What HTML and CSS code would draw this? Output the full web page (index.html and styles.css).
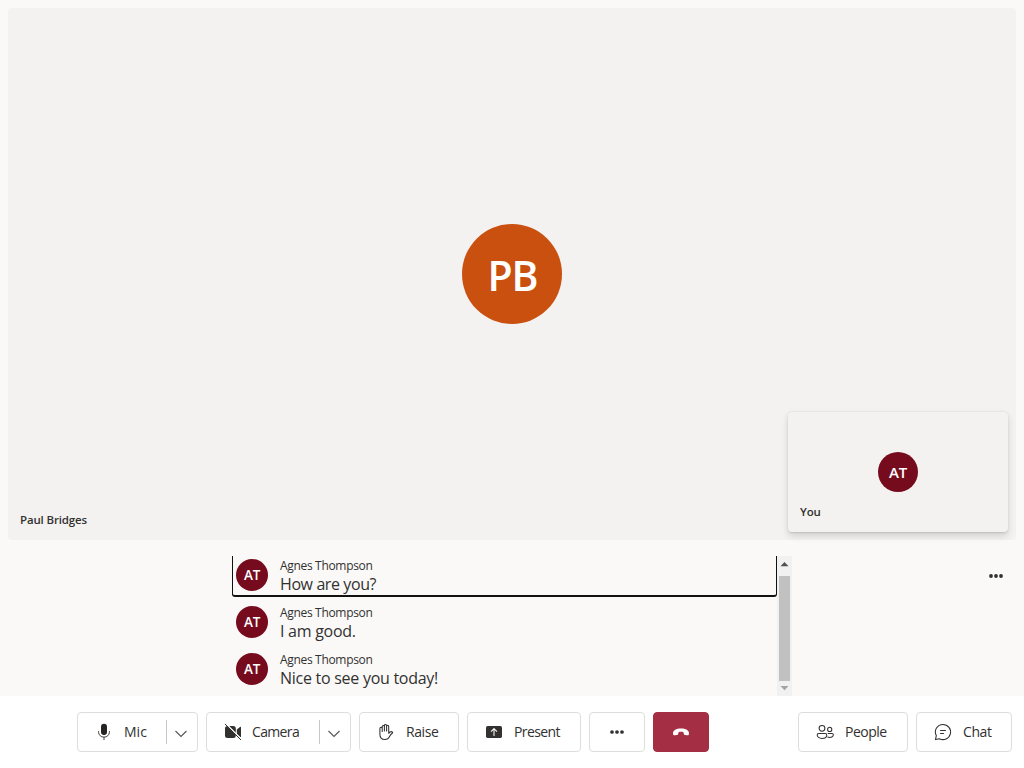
FILE: index.html
```html
<!DOCTYPE html>
<html lang="en">
<head>
<meta charset="utf-8">
<title>Call</title>
<link rel="stylesheet" href="styles.css">
</head>
<body>
<main class="call">
  <section class="stage">
    <div class="avatar avatar-large"><span class="initials-large">PB</span></div>
    <span class="tile-name"><span class="name-paul">Paul Bridges</span></span>
    <div class="local-tile">
      <div class="avatar avatar-medium"><span class="initials-medium">AT</span></div>
      <span class="tile-name"><span class="name-you">You</span></span>
    </div>
  </section>
  <section class="captions">
    <div class="caption-list">
      <div class="caption focused">
        <div class="avatar avatar-small"><span class="initials-small">AT</span></div>
        <div class="caption-body"><div class="speaker">Agnes Thompson</div><div class="speech speech-question">How are you?</div></div>
      </div>
      <div class="caption">
        <div class="avatar avatar-small"><span class="initials-small">AT</span></div>
        <div class="caption-body"><div class="speaker">Agnes Thompson</div><div class="speech">I am good.</div></div>
      </div>
      <div class="caption">
        <div class="avatar avatar-small"><span class="initials-small">AT</span></div>
        <div class="caption-body"><div class="speaker">Agnes Thompson</div><div class="speech">Nice to see you today!</div></div>
      </div>
    </div>
    <div class="scrollbar">
      <svg class="scroll-arrow" viewBox="0 0 15 20"><path d="M3.500 10.200h8L7.500 6z" fill="#505050"/></svg>
      <div class="scroll-thumb"></div>
      <svg class="scroll-arrow-end" viewBox="0 0 15 15"><path d="M3.500 5h8l-4 4.200z" fill="#a3a3a3"/></svg>
    </div>
    <div class="caption-more">
      <svg class="icon" viewBox="0 0 20 20"><g fill="#323130"><circle cx="5" cy="10" r="1.900"/><circle cx="10" cy="10" r="1.900"/><circle cx="15" cy="10" r="1.900"/></g></svg>
    </div>
  </section>
</main>
<footer class="controls">
  <div class="group">
    <div class="button mic">
      <svg class="icon" viewBox="0 0 20 20"><rect x="7" y="1.700" width="6" height="11.300" rx="3" fill="#252423"/><path d="M4.600 9.500v.7a5.400 5 0 0 0 10.800 0v-.7M10 15.200v2.500" fill="none" stroke="#484644" stroke-width="1" stroke-linecap="round"/></svg>
      <span class="label label-mic">Mic</span>
      <span class="split"><svg class="chevron" viewBox="0 0 14 8"><path d="M1.500 1 7 6.500 12.500 1" fill="none" stroke="#555" stroke-width="1.100"/></svg></span>
    </div>
    <div class="button camera">
      <svg class="icon" viewBox="0 0 20 20"><path d="M2 6.500A2.500 2.500 0 0 1 4.500 4h5.800A2.500 2.500 0 0 1 12.800 6.500v7a2.500 2.500 0 0 1-2.500 2.500H4.500A2.500 2.500 0 0 1 2 13.500zM13.800 7.500 17 5q1-.7 1 .5v9q0 1-1 .4l-3.200-2.500z" fill="#323130"/><path d="M3 1.800 18.500 17.300" stroke="#fff" stroke-width="1.300"/><path d="m2 2 16 16" stroke="#323130" stroke-width="1"/></svg>
      <span class="label label-camera">Camera</span>
      <span class="split"><svg class="chevron" viewBox="0 0 14 8"><path d="M1.500 1 7 6.500 12.500 1" fill="none" stroke="#555" stroke-width="1.100"/></svg></span>
    </div>
    <div class="button raise">
      <svg class="icon" viewBox="0 0 20 20"><path d="M6.200 9.500V4.600a1.100 1.100 0 0 1 2.200 0M8.400 9V3.500a1.100 1.100 0 0 1 2.200 0V9M10.600 4.300a1.050 1.050 0 0 1 2.100 0V9.500M6.200 9.500V6.400a1.100 1.100 0 0 0-2.300 0v5.800c0 3.300 1.900 5.300 4.900 5.300 2.500 0 3.900-1 4.900-3.200.7-1.400 1.700-2.400 2.700-3.300.4-.3.300-.7-.1-1-1-.7-2.300-.3-3.600 1.300V4.500" fill="none" stroke="#323130" stroke-width="1.050" stroke-linejoin="round" stroke-linecap="round"/></svg>
      <span class="label label-raise">Raise</span>
    </div>
    <div class="button present">
      <svg class="icon" viewBox="0 0 20 20"><rect x="2" y="4" width="16" height="12" rx="1.700" fill="#323130"/><path d="M10 13.500V6.800M7.300 9.300 10 6.600l2.700 2.700" fill="none" stroke="#fff" stroke-width="1.050" stroke-linecap="round" stroke-linejoin="round"/></svg>
      <span class="label label-present">Present</span>
    </div>
    <div class="button icon-only">
      <svg class="icon" viewBox="0 0 20 20"><g fill="#323130"><circle cx="5" cy="10" r="1.850"/><circle cx="10" cy="10" r="1.850"/><circle cx="15" cy="10" r="1.850"/></g></svg>
    </div>
    <div class="button icon-only hangup">
      <svg class="icon" viewBox="0 0 20 20"><path d="M2 11.300C2 8.300 5.200 6.400 10 6.400s8 1.900 8 4.900c0 1.700-.6 2.300-2 2l-1.700-.3c-1-.2-1.500-.7-1.600-1.600l-.2-1.100c-1.600-.6-3.400-.6-5 0l-.2 1.100c-.1.900-.6 1.400-1.600 1.600L4 13.300c-1.400.3-2-.3-2-2z" fill="#fff"/></svg>
    </div>
  </div>
  <div class="group side">
    <div class="button people">
      <svg class="icon" viewBox="0 0 20 20"><g fill="none" stroke="#323130" stroke-width="1.050"><circle cx="7" cy="6.300" r="2.900"/><circle cx="14.700" cy="7.400" r="2.100"/><path d="M3.700 11.500h6.600c.9 0 1.500.6 1.500 1.400 0 2-2 3.500-4.800 3.500s-4.800-1.500-4.800-3.500c0-.8.600-1.400 1.500-1.400zM13.200 11.500h3.700c.8 0 1.400.5 1.400 1.300 0 1.500-1.500 2.600-3.700 2.600q-1 0-1.800-.3" stroke-linecap="round"/></g></svg>
      <span class="label label-people">People</span>
    </div>
    <div class="button chat">
      <svg class="icon" viewBox="0 0 20 20"><path d="M10 2.400A7.600 7.600 0 1 1 6.400 16.700L2.500 17.600 3.300 13.600A7.600 7.600 0 0 1 10 2.400zM7.500 8.500h5M7.500 11.500h3" fill="none" stroke="#323130" stroke-width="1.050" stroke-linecap="round" stroke-linejoin="round"/></svg>
      <span class="label label-chat">Chat</span>
    </div>
  </div>
</footer>
</body>
</html>
```
FILE: styles.css
```css
* { box-sizing: border-box; }
body {
  margin: 0;
  width: 1024px;
  height: 768px;
  display: flex;
  flex-direction: column;
  background: #fff;
  color: #323130;
  font-family: "Open Sans", "Noto Sans", sans-serif;
  overflow: hidden;
}
.call {
  height: 696px;
  padding: 8px 8px 0;
  background: #faf9f8;
}
.stage {
  position: relative;
  display: flex;
  align-items: center;
  justify-content: center;
  height: 532px;
  background: #f3f2f1;
  border-radius: 4px;
}
.avatar {
  display: flex;
  flex: none;
  align-items: center;
  justify-content: center;
  border-radius: 50%;
  background: #750b1c;
  color: #fff;
  font-weight: 600;
  white-space: nowrap;
}
.avatar-large { width: 100px; height: 100px; background: #ca5010; font-size: 41px; }
.avatar-medium { width: 40px; height: 40px; font-size: 15px; }
.avatar-small { width: 32px; height: 32px; font-size: 13.500px; }
.initials-large { padding: 2px 0 0 1px; letter-spacing: -1px; }
.initials-medium, .initials-small { letter-spacing: -.3px; }
.tile-name {
  position: absolute;
  left: 12px;
  bottom: 12px;
  font-size: 11.500px;
  line-height: 16px;
  font-weight: 600;
  letter-spacing: -.15px;
}
.local-tile {
  position: absolute;
  right: 8px;
  bottom: 8px;
  width: 220px;
  height: 120px;
  display: flex;
  align-items: center;
  justify-content: center;
  background: #f3f2f1;
  border-radius: 4px;
  box-shadow: 0 3.200px 7.200px rgba(0, 0, 0, .132), 0 .6px 1.800px rgba(0, 0, 0, .108);
}
.captions {
  display: flex;
  height: 140px;
  margin: 16px 0 0 224px;
  overflow: hidden;
}
.caption-list { width: 545px; }
.caption {
  display: flex;
  align-items: flex-start;
  gap: 12px;
  height: 41px;
  margin-bottom: 6px;
  padding: 3px 4px 0;
}
.focused {
  border: solid #111;
  border-width: 0 1px 2px;
  border-radius: 0 0 3px 3px;
  padding: 3px 3px 0;
}
.caption-body { white-space: nowrap; }
.speaker { font-size: 12px; line-height: 16px; margin-top: -1px; letter-spacing: -.32px; }
.speech { font-size: 16px; line-height: 20px; letter-spacing: -.27px; }
.speech-question { letter-spacing: -.4px; }
.scrollbar {
  display: flex;
  flex-direction: column;
  align-items: center;
  width: 15px;
  background: #f1f1f1;
}
.scroll-arrow { display: block; width: 15px; height: 20px; }
.scroll-thumb { width: 11px; height: 105px; background: #c1c1c1; }
.scroll-arrow-end { display: block; width: 15px; height: 15px; }
.caption-more { margin-left: auto; padding: 10px 10px 0 0; }
.icon { display: block; flex: none; width: 20px; height: 20px; }
.controls {
  display: flex;
  justify-content: space-between;
  height: 72px;
  padding: 16px 12px 16px 77px;
}
.group { display: flex; gap: 8px; }
.button {
  display: flex;
  align-items: center;
  height: 40px;
  padding-left: 16px;
  border: 1px solid #dddddc;
  border-radius: 4px;
  background: #fff;
}
.mic { width: 121px; }
.camera { width: 145px; }
.raise { width: 100px; }
.present { width: 114px; }
.people { width: 110px; }
.chat { width: 96px; }
.icon-only { width: 56px; justify-content: center; padding: 0; }
.hangup { background: #a42e43; border-color: #a42e43; }
.label { margin-left: 10px; font-size: 14px; line-height: 20px; white-space: nowrap; letter-spacing: -.4px; }
.label-mic { letter-spacing: 0; }
.label-camera { margin-left: 9px; letter-spacing: -.65px; }
.label-present { letter-spacing: -.6px; }
.label-people { letter-spacing: -.5px; }
.split {
  display: flex;
  align-items: center;
  justify-content: center;
  width: 31px;
  height: 24px;
  margin-left: auto;
  padding: 4px 2px 0 0;
  border-left: 1px solid #c8c6c4;
}
.chevron { width: 14px; height: 8px; }
```
